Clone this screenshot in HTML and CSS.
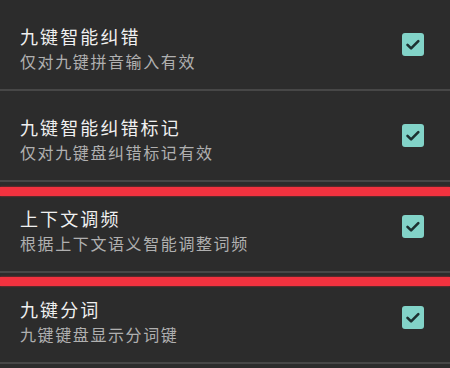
FILE: index.html
```html
<!DOCTYPE html>
<html lang="zh-CN">

<head>
  <meta charset="UTF-8">
  <title>九键设置</title>
  <link rel="stylesheet" href="styles.css">
</head>

<body>
  <main class="settings">
    <div class="option">
      <div class="option__text">
        <p class="option__title">九键智能纠错</p>
        <p class="option__sub">仅对九键拼音输入有效</p>
      </div>
      <span class="option__check"><svg viewBox="0 0 22 23"><path d="M5.5 11.8l3.6 3.6 7.2-7.2" /></svg></span>
    </div>
    <div class="option">
      <div class="option__text">
        <p class="option__title">九键智能纠错标记</p>
        <p class="option__sub">仅对九键盘纠错标记有效</p>
      </div>
      <span class="option__check"><svg viewBox="0 0 22 23"><path d="M5.5 11.8l3.6 3.6 7.2-7.2" /></svg></span>
    </div>
    <div class="option">
      <div class="option__text">
        <p class="option__title">上下文调频</p>
        <p class="option__sub">根据上下文语义智能调整词频</p>
      </div>
      <span class="option__check"><svg viewBox="0 0 22 23"><path d="M5.5 11.8l3.6 3.6 7.2-7.2" /></svg></span>
    </div>
    <div class="option">
      <div class="option__text">
        <p class="option__title">九键分词</p>
        <p class="option__sub">九键键盘显示分词键</p>
      </div>
      <span class="option__check"><svg viewBox="0 0 22 23"><path d="M5.5 11.8l3.6 3.6 7.2-7.2" /></svg></span>
    </div>

    <!-- annotation marks over the list -->
    <div class="mark mark_pos_top"></div>
    <div class="mark mark_pos_bottom"></div>
  </main>
</body>

</html>
```

FILE: styles.css
```css
html,
body {
  margin: 0;
  background-color: #2c2c2c;
  font-family: "Noto Sans CJK SC", "Noto Sans", sans-serif;
  -webkit-font-smoothing: antialiased;
}

p {
  margin: 0;
}

.settings {
  position: relative;
  width: 450px;
  height: 368px;
  overflow: hidden;
}

.option {
  height: 91px;
  box-sizing: border-box;
  padding: 0 26px 0 20px;
  display: flex;
  align-items: center;
  justify-content: space-between;
  border-bottom: 2px solid #474747;
}

.option__text {
  padding-top: 7px;
}

.option__title {
  font-size: 18px;
  line-height: 25px;
  letter-spacing: 2.1px;
  color: #f0f0f0;
}

.option__sub {
  font-size: 16px;
  line-height: 24px;
  letter-spacing: 1.6px;
  color: #b0b0b0;
}

.option__check {
  width: 22px;
  height: 23px;
  border-radius: 3px;
  background-color: #82d3c8;
  display: flex;
}

.option__check svg {
  width: 22px;
  height: 23px;
  fill: none;
  stroke: #1c3030;
  stroke-width: 2.6;
  stroke-linecap: round;
  stroke-linejoin: round;
}

.mark {
  position: absolute;
  left: 0;
  right: 0;
  height: 9px;
  background-color: #f2323f;
  box-shadow: 0 0 2px #b82a33;
}

.mark_pos_top {
  top: 187px;
}

.mark_pos_bottom {
  top: 277px;
}
```
